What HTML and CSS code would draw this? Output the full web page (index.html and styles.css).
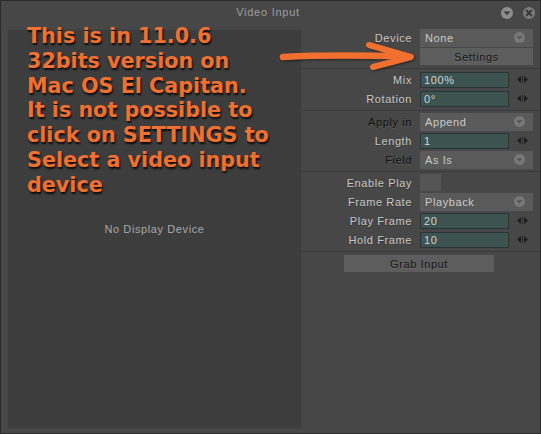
FILE: index.html
```html
<!DOCTYPE html>
<html>
<head>
<meta charset="utf-8">
<link rel="stylesheet" href="styles.css">
</head>
<body>
<div class="window">
  <div class="titlebar">
    <span></span>
    <span class="title">Video Input</span>
    <div class="title-icons">
      <svg class="tb-icon" width="12" height="12" viewBox="0 0 12 12"><circle cx="6" cy="6" r="6" fill="#8d8d8d"/><polygon points="2.6,4.4 9.4,4.4 6,8.2" fill="#3b3b3b"/></svg>
      <svg class="tb-icon" width="12" height="12" viewBox="0 0 12 12"><circle cx="6" cy="6" r="6" fill="#7c7c7c"/><path d="M3.6 3.6 L8.4 8.4 M8.4 3.6 L3.6 8.4" stroke="#3a3a3a" stroke-width="2.1" stroke-linecap="round"/></svg>
    </div>
  </div>
  <div class="content">
    <div class="display"><span>No Display Device</span></div>
    <div class="props">
      <div class="section">
        <div class="row"><span class="lbl">Device</span><div class="dropdown"><span>None</span><svg class="dd-arrow" width="11" height="11" viewBox="0 0 11 11"><circle cx="5.5" cy="5.5" r="5.5" fill="#777"/><polygon points="2.6,4.2 8.4,4.2 5.5,7.4" fill="#545454"/></svg></div></div>
        <div class="row"><span></span><button class="btn">Settings</button></div>
      </div>
      <div class="sep"></div>
      <div class="section">
        <div class="row num"><span class="lbl">Mix</span><div class="field">100%</div><svg class="spin" width="11" height="9" viewBox="0 0 11 9"><polygon points="0,4.5 4,1 4,8" fill="#1c1c1c"/><rect x="5" y="1" width="1" height="7" fill="#2a2a2a"/><polygon points="7,1 11,4.5 7,8" fill="#1c1c1c"/></svg></div>
        <div class="row num"><span class="lbl">Rotation</span><div class="field">0°</div><svg class="spin" width="11" height="9" viewBox="0 0 11 9"><polygon points="0,4.5 4,1 4,8" fill="#1c1c1c"/><rect x="5" y="1" width="1" height="7" fill="#2a2a2a"/><polygon points="7,1 11,4.5 7,8" fill="#1c1c1c"/></svg></div>
      </div>
      <div class="sep"></div>
      <div class="section">
        <div class="row"><span class="lbl dark">Apply in</span><div class="dropdown"><span>Append</span><svg class="dd-arrow" width="11" height="11" viewBox="0 0 11 11"><circle cx="5.5" cy="5.5" r="5.5" fill="#777"/><polygon points="2.6,4.2 8.4,4.2 5.5,7.4" fill="#545454"/></svg></div></div>
        <div class="row num"><span class="lbl">Length</span><div class="field">1</div><svg class="spin" width="11" height="9" viewBox="0 0 11 9"><polygon points="0,4.5 4,1 4,8" fill="#1c1c1c"/><rect x="5" y="1" width="1" height="7" fill="#2a2a2a"/><polygon points="7,1 11,4.5 7,8" fill="#1c1c1c"/></svg></div>
        <div class="row"><span class="lbl dark">Field</span><div class="dropdown"><span>As Is</span><svg class="dd-arrow" width="11" height="11" viewBox="0 0 11 11"><circle cx="5.5" cy="5.5" r="5.5" fill="#777"/><polygon points="2.6,4.2 8.4,4.2 5.5,7.4" fill="#545454"/></svg></div></div>
      </div>
      <div class="sep"></div>
      <div class="section">
        <div class="row"><span class="lbl">Enable Play</span><div class="check"></div></div>
        <div class="row"><span class="lbl">Frame Rate</span><div class="dropdown"><span>Playback</span><svg class="dd-arrow" width="11" height="11" viewBox="0 0 11 11"><circle cx="5.5" cy="5.5" r="5.5" fill="#777"/><polygon points="2.6,4.2 8.4,4.2 5.5,7.4" fill="#545454"/></svg></div></div>
        <div class="row num"><span class="lbl">Play Frame</span><div class="field">20</div><svg class="spin" width="11" height="9" viewBox="0 0 11 9"><polygon points="0,4.5 4,1 4,8" fill="#1c1c1c"/><rect x="5" y="1" width="1" height="7" fill="#2a2a2a"/><polygon points="7,1 11,4.5 7,8" fill="#1c1c1c"/></svg></div>
        <div class="row num"><span class="lbl">Hold Frame</span><div class="field">10</div><svg class="spin" width="11" height="9" viewBox="0 0 11 9"><polygon points="0,4.5 4,1 4,8" fill="#1c1c1c"/><rect x="5" y="1" width="1" height="7" fill="#2a2a2a"/><polygon points="7,1 11,4.5 7,8" fill="#1c1c1c"/></svg></div>
      </div>
      <div class="sep"></div>
      <div class="grab-row"><button class="btn grab">Grab Input</button></div>
    </div>
  </div>
  <p class="note">This is in 11.0.6<br>32bits version on<br>Mac OS El Capitan.<br>It is not possible to<br>click on SETTINGS to<br>Select a video input<br>device</p>
  <svg class="arrow" width="541" height="434" viewBox="0 0 541 434">
    <path d="M283 57 Q330 54.5 406 56.5" stroke="#f1702f" stroke-width="6.5" fill="none" stroke-linecap="round"/>
    <path d="M369 45 L411 57 L373 67" stroke="#f1702f" stroke-width="6" fill="none" stroke-linecap="round" stroke-linejoin="round"/>
  </svg>
</div>
</body>
</html>
```
FILE: styles.css
```css
html, body {
  margin: 0;
  padding: 0;
  background: #474747;
}

.window {
  width: 541px;
  height: 434px;
  box-sizing: border-box;
  border: 1px solid #2b2b2b;
  background: #474747;
  position: relative;
  overflow: hidden;
  font-family: "Liberation Sans", Arial, sans-serif;
  font-size: 11px;
  letter-spacing: 0.6px;
}

.titlebar {
  height: 27px;
  box-sizing: border-box;
  padding: 5px 5px 0 0;
  display: grid;
  grid-template-columns: 1fr auto 1fr;
  align-items: start;
}

.title {
  color: #9d9d9d;
  letter-spacing: 0.75px;
  line-height: 13px;
}

.title-icons {
  justify-self: end;
  display: flex;
  gap: 10px;
  padding-top: 1px;
}

.tb-icon {
  display: block;
}

.content {
  display: flex;
  padding-left: 6px;
}

.display {
  width: 295px;
  height: 400px;
  box-sizing: border-box;
  margin-top: 1px;
  background: #3d3d3d;
  border: 1px solid #444444;
  display: flex;
  align-items: center;
  justify-content: center;
  color: #a9a9a9;
}

.props {
  flex: 1;
}

.section {
  display: flex;
  flex-direction: column;
}

.row {
  height: 19px;
  display: grid;
  grid-template-columns: 110px 113px;
  column-gap: 8px;
  align-items: center;
}

.row.num {
  grid-template-columns: 110px 89px 11px;
}

.lbl {
  text-align: right;
  color: #c8c8c8;
  text-shadow: 0 1px 0 rgba(0, 0, 0, 0.25);
}

.lbl.dark {
  color: #0f0f0f;
  text-shadow: 0 1px 0 rgba(255, 255, 255, 0.14);
}

.dropdown {
  height: 18px;
  box-sizing: border-box;
  background: #5a5a5a;
  display: flex;
  align-items: center;
  justify-content: space-between;
  padding: 0 8px 0 5px;
  color: #cacaca;
}

.dd-arrow {
  display: block;
}

.btn {
  height: 17px;
  border: 0;
  margin: 0;
  padding: 0;
  background: #5d5d5d;
  color: #151515;
  font-family: inherit;
  font-size: 11px;
  letter-spacing: 0.6px;
  text-shadow: 0 1px 0 rgba(255, 255, 255, 0.12);
}

.row .btn {
  width: 113px;
}

.field {
  height: 16px;
  box-sizing: border-box;
  background: #3d5350;
  border: 1px solid #2b3432;
  color: #d3d3d3;
  padding-left: 3px;
  line-height: 14px;
}

.spin {
  display: block;
}

.check {
  width: 21px;
  height: 17px;
  background: #555555;
}

.sep {
  height: 1px;
  margin: 2px 0 1px;
  background: #3a3a3a;
}

.grab-row {
  padding-top: 2px;
}

.btn.grab {
  display: block;
  width: 150px;
  margin-left: 42px;
}

.note {
  position: absolute;
  left: 26px;
  top: 23px;
  margin: 0;
  font-family: "DejaVu Sans", Verdana, sans-serif;
  font-weight: bold;
  font-size: 20.7px;
  line-height: 24.8px;
  letter-spacing: 0;
  color: #f1702f;
  text-shadow: 1px 2px 2px rgba(0, 0, 0, 0.85);
}

.arrow {
  position: absolute;
  left: -1px;
  top: -1px;
  pointer-events: none;
  filter: drop-shadow(1px 1px 1px rgba(0, 0, 0, 0.5));
}
```
